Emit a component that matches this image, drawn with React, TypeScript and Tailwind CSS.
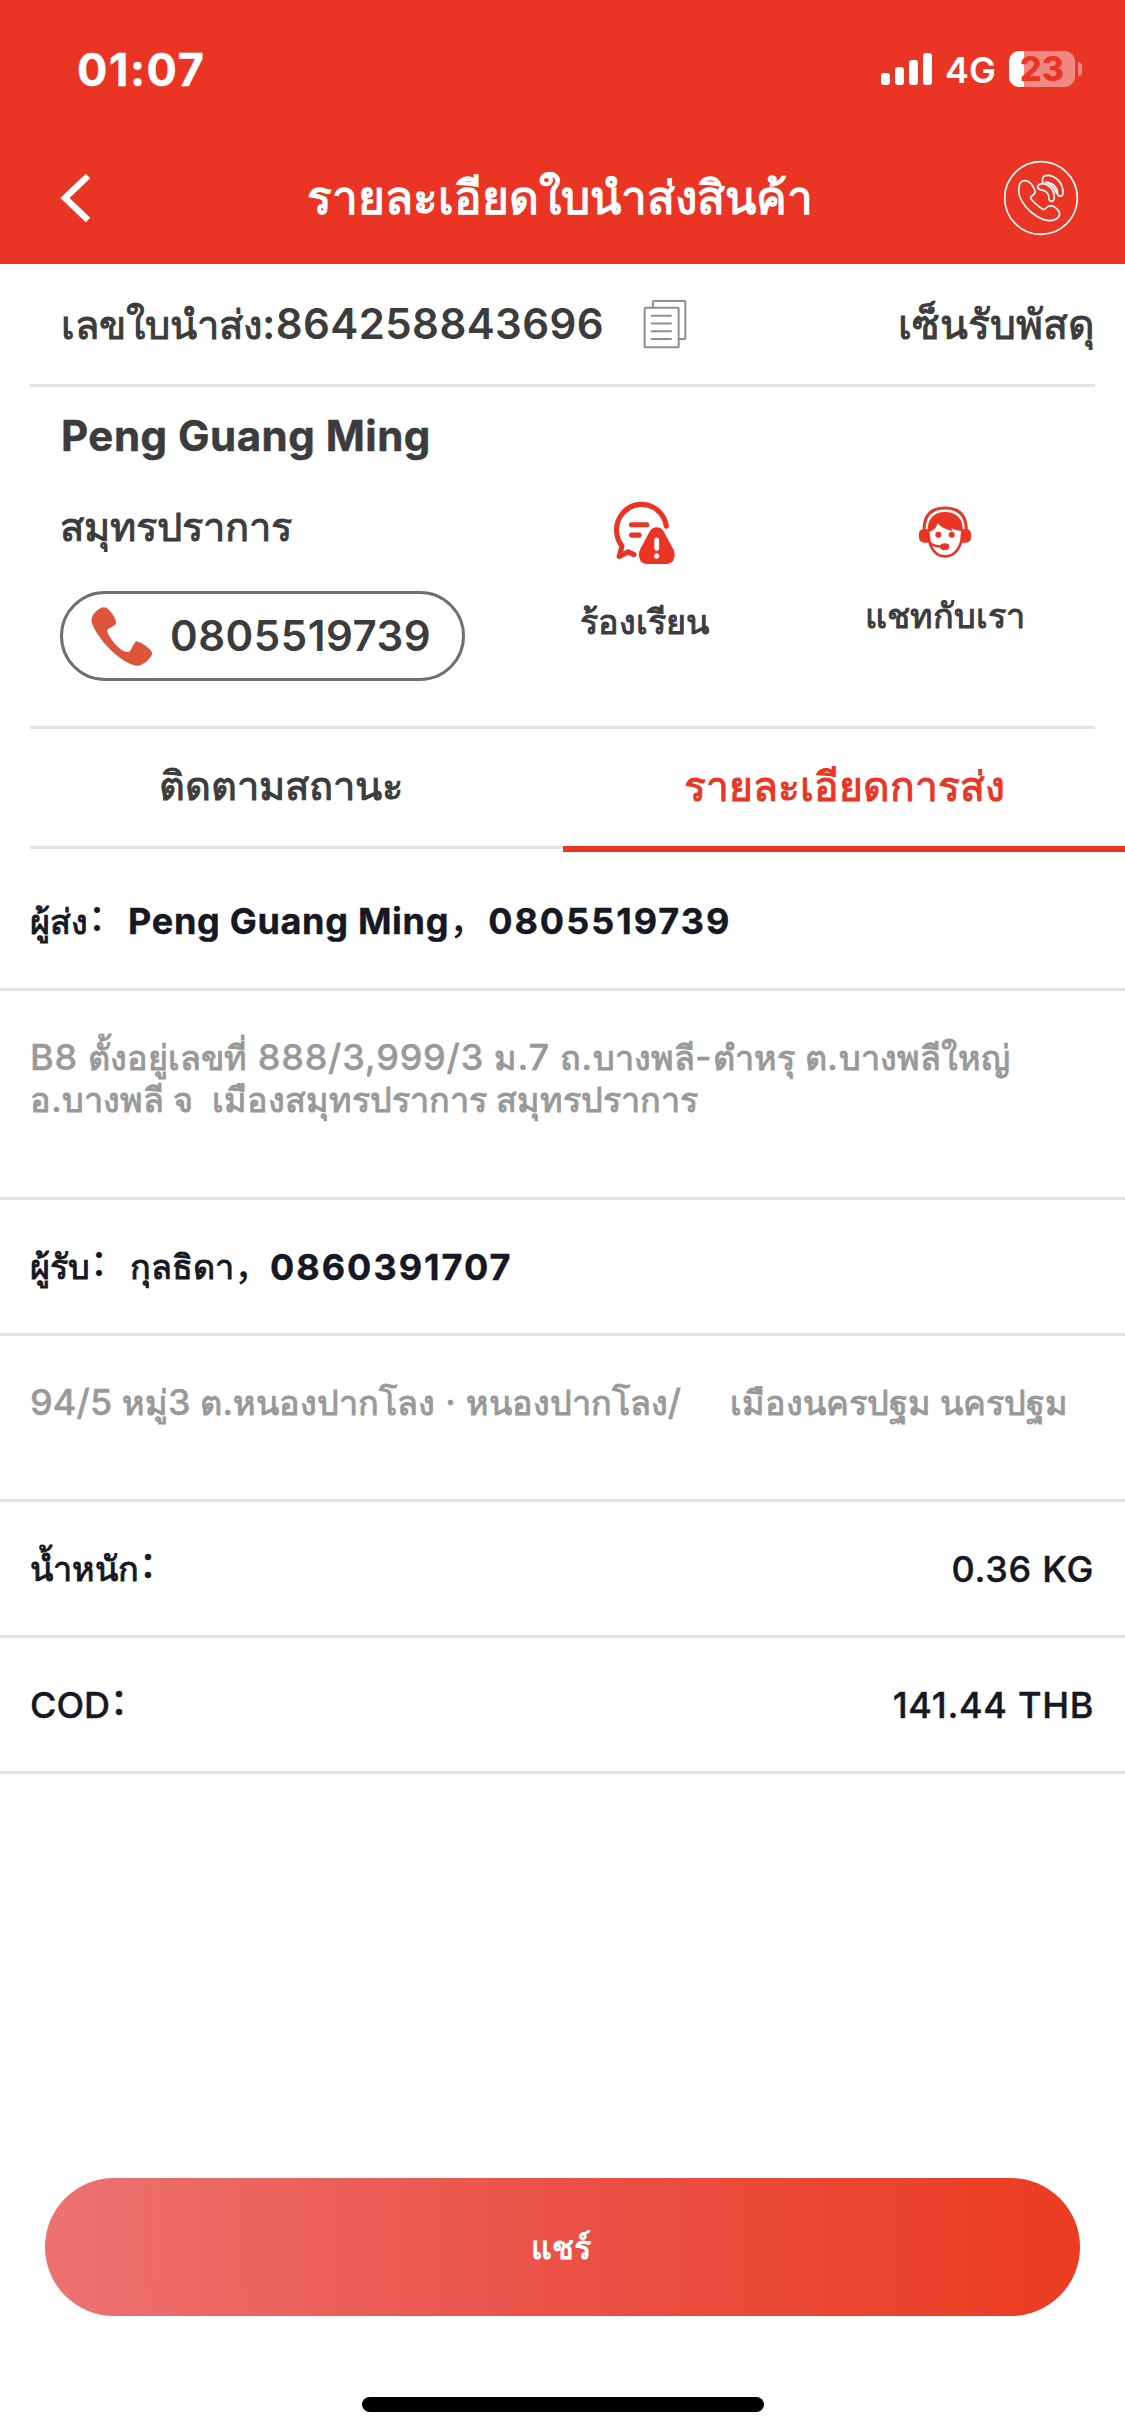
const addressFrom = [
  {
    text: "B8 ตั้งอยู่เลขที่ 888/3,999/3 ม.7 ถ.บางพลี-ตำหรุ ต.บางพลีใหญ่",
    spacing: "tracking-[0.8px]",
  },
  {
    text: "อ.บางพลี จ  เมืองสมุทรปราการ สมุทรปราการ",
    spacing: "tracking-[-0.2px]",
  },
];

const addressTo = [
  {
    text: "94/5 หมู่3 ต.หนองปากโลง · หนองปากโลง/     เมืองนครปฐม นครปฐม",
    spacing: "tracking-[0.1px]",
  },
];

const summary = [
  { id: 1, label: "น้ำหนัก", value: "0.36 KG" },
  { id: 2, label: "COD", value: "141.44 THB" },
];

// Thai glyphs run larger than the Latin ones, so they get their own size
const Mixed = ({ text }: { text: string }) => (
  <>
    {text.split(/([\u0E00-\u0E7F]+)/).map((part, i) =>
      i % 2 === 1 ? (
        <span
          key={i}
          className="text-[0.95em] font-normal tracking-normal [-webkit-text-stroke:1px]"
        >
          {part}
        </span>
      ) : (
        <span key={i}>{part}</span>
      )
    )}
  </>
);

const Colon = () => <span className="relative -top-[3px]">：</span>;

const StatusBar = () => (
  <div className="h-[138px] flex items-center justify-between pl-[77px] pr-[43px] text-white">
    <span className="text-[45px] leading-none font-bold tracking-[1.6px] [-webkit-text-stroke:0.4px]">
      01:07
    </span>
    <div className="flex items-center">
      <div className="flex items-end gap-[5px] mr-[13px]">
        <span className="w-[9px] h-[12px] rounded-[3px] bg-white" />
        <span className="w-[9px] h-[18px] rounded-[3px] bg-white" />
        <span className="w-[9px] h-[25px] rounded-[3px] bg-white" />
        <span className="w-[9px] h-[32px] rounded-[3px] bg-white" />
      </div>
      <span className="text-[36px] leading-none font-semibold mt-[2px] mr-[13px]">
        4G
      </span>
      <div className="w-[66px] h-[36px] rounded-[10px] flex items-center justify-center bg-[linear-gradient(90deg,#fff_15px,#f08883_15px)] text-[34px] leading-none font-extrabold text-[#ea3424]">
        23
      </div>
      <span className="w-[4px] h-[14px] ml-[3px] rounded-r-full bg-[#f08883]" />
    </div>
  </div>
);

const BackIcon = () => (
  <svg width="30" height="50" viewBox="0 0 30 50" fill="none">
    <path d="M28 3L5 25L28 47" stroke="#fff" strokeWidth="6.500" />
  </svg>
);

const CallIcon = () => (
  <svg
    width="76"
    height="76"
    viewBox="429 390 228 228"
    fill="none"
    stroke="#fff"
    strokeWidth="5"
    strokeLinejoin="round"
    strokeLinecap="round"
  >
    <circle cx="543" cy="504" r="109" />
    <path d="M482 457C490 449 505 450 514 462C522 473 528 482 524 490C520 497 510 498 512 505C520 518 540 532 550 539C556 540 560 527 573 527C583 528 600 542 599 553C597 566 580 573 566 572C545 571 515 552 498 531C485 515 475 497 476 479C477 470 478 461 482 457Z" />
    <path d="M537 464C552 456 570 466 578 482C584 495 584 502 582 508C579 516 569 516 567 508C568 495 562 482 541 479C531 476 530 467 537 464Z" />
    <path d="M548 458C546 448 547 442 553 438C570 432 592 442 602 460C610 475 610 485 608 494C605 501 596 500 593 494C594 476 583 458 556 456C572 462 582 472 590 490" />
  </svg>
);

const CopyIcon = () => (
  <svg
    width="44"
    height="50"
    viewBox="132 57 132 150"
    fill="none"
    stroke="#8f8f8f"
    strokeWidth="6"
  >
    <path d="M162 83V66q0-3 3-3H256q3 0 3 3V174q0 3-3 3H240" />
    <rect x="137" y="83" width="102" height="119" rx="2" />
    <path
      d="M158 107H216M158 130.500H216M158 154H216M158 177H216"
      strokeLinecap="round"
    />
  </svg>
);

const PhoneIcon = () => (
  <svg width="64" height="61" viewBox="272 374 192 184">
    <path
      fill="#dc553a"
      d="M312 378C322 377 332 388 340 400C348 413 352 420 349 428C343 436 328 439 323 447C325 462 345 490 365 505C375 512 385 514 391 511C398 503 402 488 410 481C418 480 432 488 442 496C452 504 461 513 459 519C452 535 432 553 415 554C395 555 355 530 325 498C300 470 280 440 276 420C274 405 292 381 312 378Z"
    />
  </svg>
);

const ComplaintIcon = () => (
  <svg width="63" height="65" viewBox="214 62 183 189" fill="none">
    <g
      stroke="#ea3424"
      strokeWidth="15"
      strokeLinecap="round"
      strokeLinejoin="round"
    >
      <path d="M369 138A73 76 0 0 0 224 150Q225 177 240 196L232 226L258 213L275 221" />
      <path d="M268 134H312M268 164H290" />
    </g>
    <path
      fill="#ea3424"
      d="M341 141Q354 141 361 153L390 207Q397 222 389 237Q382 248 369 248H313Q300 248 293 237Q286 222 292 207L321 153Q328 141 341 141Z"
    />
    <path
      d="M341 178V203"
      stroke="#fff"
      strokeWidth="14"
      strokeLinecap="round"
    />
    <circle cx="341" cy="225" r="7.500" fill="#fff" />
  </svg>
);

const AgentIcon = () => (
  <svg width="54" height="54" viewBox="53 48 162 162" fill="none">
    <g stroke="#ea3424">
      <path
        d="M71 124C71 78 94 57 134 57C175 57 198 78 198 124"
        strokeWidth="9"
      />
      <path
        d="M85 136C85 175 105 202 134 202C163 202 185 175 185 136"
        strokeWidth="8"
      />
      <path d="M88 162Q100 172 124 173" strokeWidth="7" />
    </g>
    <g fill="#ea3424">
      <path d="M66 121H88V161H74Q56 161 56 145V135Q56 124 66 121Z" />
      <path d="M203 121H182V161H195Q212 161 212 145V135Q212 124 203 121Z" />
      <path d="M82 130C80 90 100 69 134 69C168 69 190 90 187 126C174 126 160 122 153 117L156 127C140 121 121 116 112 103C108 118 98 126 82 130Z" />
      <circle cx="114" cy="137" r="9" />
      <circle cx="154" cy="137" r="9" />
      <ellipse cx="133" cy="173" rx="14" ry="10" />
    </g>
  </svg>
);

const Address = ({ lines }: { lines: { text: string; spacing: string }[] }) => (
  <div className="px-[30px] pt-[45px] text-[36px] leading-[42px] font-medium text-[#999] whitespace-pre [-webkit-text-stroke:0.4px]">
    {lines.map((line) => (
      <p key={line.text} className={`h-[42px] ${line.spacing}`}>
        <Mixed text={line.text} />
      </p>
    ))}
  </div>
);

export default function App() {
  return (
    <div className="w-[1125px] h-[2436px] bg-white flex flex-col overflow-hidden text-[#3c3c3c] font-['Inter','Noto_Sans_CJK_SC',sans-serif]">
      <header className="h-[264px] shrink-0 bg-[#ea3424]">
        <StatusBar />
        <div className="h-[120px] flex items-center justify-between pl-[60px] pr-[46px] text-white">
          <BackIcon />
          <h1 className="text-[46px] leading-none font-normal [-webkit-text-stroke:1.4px] ml-[27px] pb-[3px]">
            รายละเอียดใบนำส่งสินค้า
          </h1>
          <CallIcon />
        </div>
      </header>

      <div className="mx-[30px] h-[123px] shrink-0 border-b-[3px] border-[#e3e3e3] flex items-center justify-between pl-[31px] text-[42px] leading-none font-semibold">
        <div className="flex items-center">
          <span className="tracking-[0.4px]">
            <Mixed text="เลขใบนำส่ง:864258843696" />
          </span>
          <span className="ml-[39px]">
            <CopyIcon />
          </span>
        </div>
        <span className="pb-[2px] text-[43px]">
          <Mixed text="เซ็นรับพัสดุ" />
        </span>
      </div>

      <div className="mx-[30px] h-[342px] shrink-0 border-b-[3px] border-[#e3e3e3] flex">
        <div className="w-[464px] pl-[30px] pt-[24px]">
          <h2 className="text-[42px] leading-[50px] font-bold tracking-[0.5px] [-webkit-text-stroke:0.5px] pl-[1px]">
            Peng Guang Ming
          </h2>
          <p className="mt-[40px] h-[50px] text-[42px] leading-[50px]">
            <Mixed text="สมุทรปราการ" />
          </p>
          <div className="mt-[40px] w-[405px] h-[90px] rounded-full border-[3px] border-[#6f7072] flex items-center pl-[27px]">
            <PhoneIcon />
            <span className="ml-[16px] text-[42px] leading-none font-semibold tracking-[0.5px]">
              0805519739
            </span>
          </div>
        </div>
        <div className="flex-1 flex flex-col items-center pt-[113px]">
          <ComplaintIcon />
          <span className="mt-[36px] h-[40px] text-[36px] leading-[40px]">
            <Mixed text="ร้องเรียน" />
          </span>
        </div>
        <div className="flex-1 flex flex-col items-center pt-[118px]">
          <AgentIcon />
          <span className="mt-[36px] h-[40px] text-[36px] leading-[40px]">
            <Mixed text="แชทกับเรา" />
          </span>
        </div>
      </div>

      <div className="h-[123px] shrink-0 flex text-[42px] leading-none">
        <div className="w-[533px] h-[120px] ml-[30px] pr-[31px] pb-[3px] border-b-[3px] border-[#e3e3e3] flex items-center justify-center">
          <Mixed text="ติดตามสถานะ" />
        </div>
        <div className="flex-1 h-[123px] pb-[3px] border-b-[6px] border-[#ea3424] text-[#ea3424] text-[43px] flex items-center justify-center">
          <Mixed text="รายละเอียดการส่ง" />
        </div>
      </div>

      <div className="h-[139px] shrink-0 pt-[2px] border-b-[3px] border-[#e3e3e3] px-[30px] flex items-center text-[36px] leading-none font-medium text-[#161823]">
        <span className="mr-[4px]">
          <Mixed text="ผู้ส่ง" />
          <Colon />
        </span>
        <span className="font-bold tracking-[0.7px] [-webkit-text-stroke:0.4px]">
          Peng Guang Ming
        </span>
        <span className="mr-[3px]">，</span>
        <span className="font-bold tracking-[2px] [-webkit-text-stroke:0.4px]">
          0805519739
        </span>
      </div>
      <div className="h-[209px] shrink-0 border-b-[3px] border-[#e3e3e3]">
        <Address lines={addressFrom} />
      </div>

      <div className="h-[136px] shrink-0 border-b-[3px] border-[#e3e3e3] px-[30px] flex items-center text-[36px] leading-none font-medium text-[#161823]">
        <span className="mr-[4px]">
          <Mixed text="ผู้รับ" />
          <Colon />
        </span>
        <span>
          <Mixed text="กุลธิดา" />
        </span>
        <span>，</span>
        <span className="font-bold tracking-[2px] [-webkit-text-stroke:0.4px]">
          0860391707
        </span>
      </div>
      <div className="h-[166px] shrink-0 border-b-[3px] border-[#e3e3e3]">
        <Address lines={addressTo} />
      </div>

      {summary.map((item) => (
        <div
          key={item.id}
          className="h-[136px] shrink-0 border-b-[3px] border-[#e3e3e3] pl-[30px] pr-[31px] flex items-center justify-between text-[36px] leading-none font-medium text-[#161823] [-webkit-text-stroke:0.4px]"
        >
          <span>
            <Mixed text={item.label} />
            <Colon />
          </span>
          <span className="tracking-[0.7px]">{item.value}</span>
        </div>
      ))}

      <div className="mt-auto px-[45px]">
        <button className="w-full h-[138px] pr-[3px] rounded-full bg-[linear-gradient(90deg,#ed7272,#eb5146_50%,#ea3c20)] text-white text-[34px] leading-none">
          <Mixed text="แชร์" />
        </button>
      </div>
      <div className="mt-[81px] mb-[24px] mx-auto w-[402px] h-[15px] rounded-full bg-black" />
    </div>
  );
}
